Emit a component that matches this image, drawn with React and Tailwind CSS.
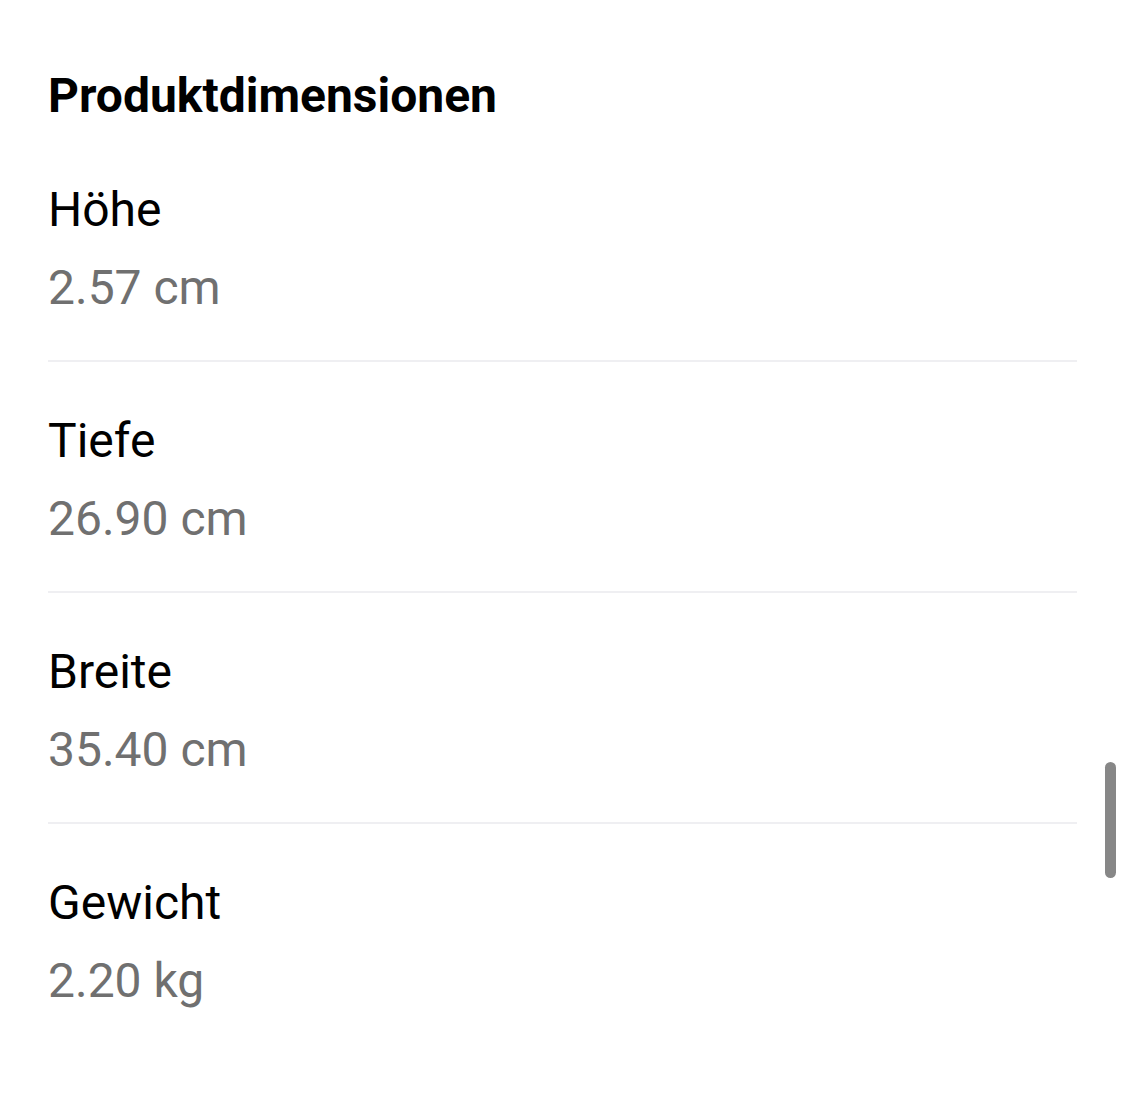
import React from "react";

const rows = [
  { label: "Höhe", value: "2.57 cm" },
  { label: "Tiefe", value: "26.90 cm" },
  { label: "Breite", value: "35.40 cm" },
  { label: "Gewicht", value: "2.20 kg" },
];

function Row({ label, value, last }) {
  return (
    <div>
      <div className="text-[48px] leading-[56px] text-black">{label}</div>
      <div className="mt-[22px] text-[48px] leading-[56px] text-[#707070]">{value}</div>
      {!last && <div className="mt-[44px] mb-[51px] h-[2px] bg-[#efeff2]" />}
    </div>
  );
}

export default function App() {
  return (
    <div
      className="relative h-[1101px] w-[1125px] overflow-hidden bg-white px-[48px] pt-[68px]"
      style={{ fontFamily: "Roboto, 'Noto Sans', sans-serif" }}
    >
      <div className="text-[48px] font-bold leading-[56px] text-black">Produktdimensionen</div>
      <div className="mt-[58px]">
        {rows.map((r, i) => (
          <Row key={r.label} {...r} last={i === rows.length - 1} />
        ))}
      </div>

      {/* scrollbar */}
      <div className="absolute left-[1105px] top-[762px] h-[116px] w-[11px] rounded-full bg-[#878787]" />
    </div>
  );
}
